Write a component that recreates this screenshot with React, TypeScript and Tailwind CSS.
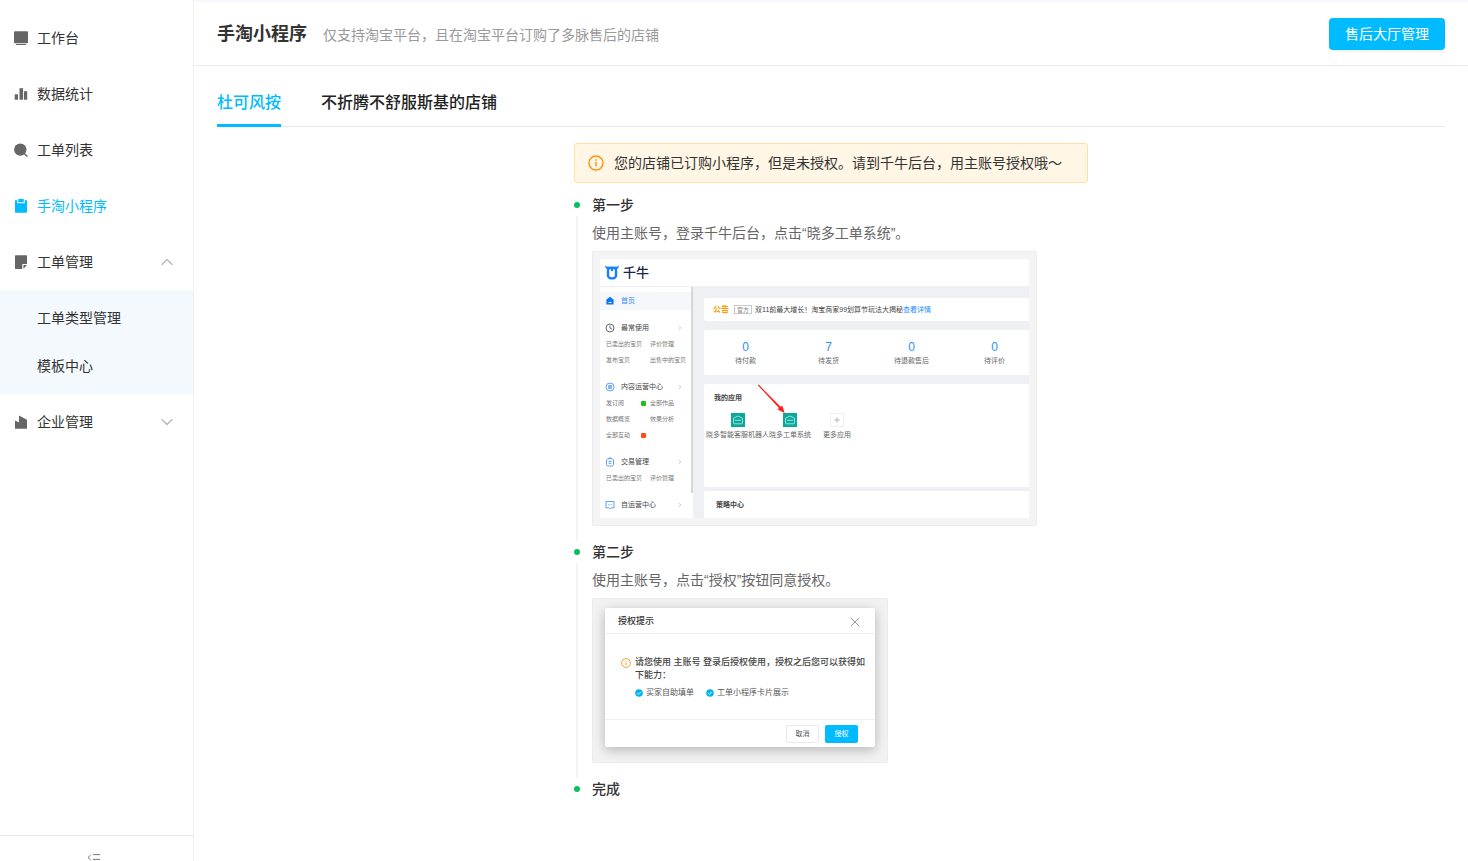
import { useState } from 'react';
import type { ReactNode } from 'react';
import { ChevronDown, ChevronUp, ChevronRight, X, Plus } from 'lucide-react';

const icons: Record<string, ReactNode> = {
  desk: (
    <>
      <rect x="0" y="0.3" width="14" height="12" rx="1" />
      <rect x="2" y="13" width="10" height="1" />
    </>
  ),
  stats: (
    <>
      <rect x="0.7" y="7.3" width="3.3" height="5.4" />
      <rect x="5.5" y="1.2" width="3.6" height="11.5" />
      <rect x="10" y="4.2" width="3.2" height="8.5" />
    </>
  ),
  list: (
    <>
      <circle cx="6.3" cy="6.6" r="6.2" />
      <path d="M10 10.3l3.4 3.3" stroke="currentColor" strokeWidth="1.4" />
    </>
  ),
  mini: <path d="M1 1.3h2.3v3h7.4v-3H13V13a.8.8 0 0 1-.8.8H1.8A.8.8 0 0 1 1 13zM4.3 0h5.4v3.2H4.3z" />,
  order: <path d="M1.6.3h10.8a.6.6 0 0 1 .6.6v8H8.3v5H1.6a.6.6 0 0 1-.6-.6V.9a.6.6 0 0 1 .6-.6zM9.5 10.1H13l-3.5 3.6z" />,
  company: <path d="M1 5.4l4 2V.4l8 4.4v9H1z" />,
};

function MenuIcon({ name, className = '' }: { name: string; className?: string }) {
  return (
    <svg viewBox="0 0 14 14" fill="currentColor" className={`size-3.5 shrink-0 ${className}`} aria-hidden="true">
      {icons[name]}
    </svg>
  );
}

const menu = [
  { icon: 'desk', label: '工作台' },
  { icon: 'stats', label: '数据统计' },
  { icon: 'list', label: '工单列表' },
  { icon: 'mini', label: '手淘小程序', active: true },
];

function Sidebar() {
  const [orderOpen, setOrderOpen] = useState(true);
  const Arrow = orderOpen ? ChevronUp : ChevronDown;

  return (
    <aside className="sticky top-0 flex h-screen w-[194px] shrink-0 flex-col overflow-hidden border-r border-[#efefef] bg-white">
      <nav className="flex-1 pt-2.5">
        {menu.map((m) => (
          <a
            key={m.label}
            href="#"
            className={`flex h-14 items-center gap-[9px] px-3.5 ${m.active ? 'text-[#00bbff]' : 'text-[#333]'}`}
          >
            <MenuIcon name={m.icon} className={m.active ? '' : 'text-[#666]'} />
            {m.label}
          </a>
        ))}
        <button onClick={() => setOrderOpen(!orderOpen)} className="flex h-14 w-full items-center gap-[9px] pr-4 pl-3.5">
          <MenuIcon name="order" className="text-[#666]" />
          工单管理
          <Arrow className="ml-auto size-5 text-[#b5b5b5]" strokeWidth={1.5} />
        </button>
        {orderOpen && (
          <div className="bg-[#f4f9fd] py-1">
            <a href="#" className="flex h-12 items-center pl-[37px]">工单类型管理</a>
            <a href="#" className="flex h-12 items-center pl-[37px]">模板中心</a>
          </div>
        )}
        <button className="flex h-14 w-full items-center gap-[9px] pr-4 pl-3.5">
          <MenuIcon name="company" className="text-[#666]" />
          企业管理
          <ChevronDown className="ml-auto size-5 text-[#b5b5b5]" strokeWidth={1.5} />
        </button>
      </nav>
      <button aria-label="收起菜单" className="flex h-[26px] shrink-0 justify-center border-t border-[#e8e8e8] pt-[18px] pr-1.5">
        <svg viewBox="0 0 14 10" className="h-2.5 w-3.5 shrink-0" fill="none" stroke="#777" aria-hidden="true">
          <path d="M3.6 1L1 3.5 3.6 6M6 .6h7M6 5.4h7" />
        </svg>
      </button>
    </aside>
  );
}

function Step({ title, last, children }: { title: string; last?: boolean; children?: ReactNode }) {
  return (
    <li className="flex gap-3">
      <div className="flex w-1.5 flex-col items-center">
        <div className="flex h-[22px] items-center">
          <span className="size-1.5 rounded-full bg-[#07c160]" />
        </div>
        {!last && <div className="w-0.5 flex-1 bg-[#f4f4f4]" />}
      </div>
      <div className={last ? '' : 'pb-[15px]'}>
        <h3 className="leading-[22px] font-medium text-[#333]">{title}</h3>
        {children}
      </div>
    </li>
  );
}

const groups = [
  { icon: 'clock', title: '最常使用', items: ['已卖出的宝贝', '评价管理', '发布宝贝', '出售中的宝贝'] },
  { icon: 'hash', title: '内容运营中心', items: ['发订阅', '全部作品', '数据概览', '效果分析', '全部互动', ''] },
  { icon: 'clip', title: '交易管理', items: ['已卖出的宝贝', '评价管理'] },
  { icon: 'chat', title: '自运营中心', items: [] },
];

const groupIcons: Record<string, ReactNode> = {
  clock: <path d="M5 1a4 4 0 1 0 0 8 4 4 0 0 0 0-8zM5 2.5V5l2 1.3" stroke="#444" />,
  hash: <path d="M5 1a4 4 0 1 0 0 8 4 4 0 0 0 0-8zM3 4h4M3 6h4M4 3v4M6 3v4" stroke="#3b8cf5" />,
  clip: <path d="M2.5 1.8h5l1 1v4.8L7.5 9h-5l-1-1.4V2.8zM3.6 1h2.8M3.5 4.5h3M3.5 6.3h3" stroke="#3b8cf5" />,
  chat: <path d="M1 1.5h8v6.3H6L5 8.8l-1-1H1zM3 4.8h.8M4.6 4.8h.8M6.2 4.8H7" stroke="#3b8cf5" />,
};

const stats = [
  ['0', '待付款'],
  ['7', '待发货'],
  ['0', '待退款售后'],
  ['0', '待评价'],
];

function AppIcon() {
  return (
    <svg viewBox="0 0 14 14" className="size-3.5" aria-hidden="true">
      <rect width="14" height="14" fill="#0aa99b" />
      <path d="M2.5 5.2L7 3l4.5 2.2v4.6q0 1-1 1h-7q-1 0-1-1zM4 7.3h6" fill="none" stroke="#bff0ea" strokeWidth=".8" />
    </svg>
  );
}

function QianniuPreview() {
  return (
    <div className="mt-[7px] w-[445px] rounded-xs border border-[#ececec] bg-[#f4f4f4] p-[7px] text-[7px] leading-4 text-[#444]">
      <div className="flex h-7 items-center gap-1 border-b border-[#eeeff1] bg-white pl-[5px]">
        <svg viewBox="0 0 14 15" className="h-[15px] w-3.5" aria-hidden="true">
          <path d="M0 .6L2 1.8 4.2 1.5 3 4.6Q.4 4 0 .6zM14 .6L12 1.8 9.8 1.5 11 4.6Q13.600 4 14 .6z" fill="#1480ff" />
          <rect x="3" y="2.6" width="8" height="10.800" rx="3" fill="#fff" stroke="#1480ff" strokeWidth="2.400" />
          <path d="M5.800 3h2.400v2.600L7 6.600l-1.200-1z" fill="#1480ff" />
        </svg>
        <span className="text-[13px] font-medium text-[#1b2447]">千牛</span>
      </div>
      <div className="flex h-[231px] overflow-hidden bg-[#eef0f4]">
        <div className="flex w-[93px] shrink-0 bg-white">
          <div className="w-[91px] pt-[5px]">
            <div className="mb-2.5 flex h-[18px] items-center gap-1.5 bg-[#f5f7fa] pl-[5px] text-[#3b8cf5]">
              <svg viewBox="0 0 10 10" className="size-2.5" fill="#0c77f2" aria-hidden="true">
                <path d="M5 .8l4.4 3.5H8.6v4.2H1.4V4.3H.6zM3.6 6v.9h2.8V6z" fillRule="evenodd" />
              </svg>
              首页
            </div>
            <div className="flex flex-col gap-[11px]">
              {groups.map((g) => (
                <div key={g.title}>
                  <div className="flex h-4 items-center gap-1.5 pr-2 pl-[5px]">
                    <svg viewBox="0 0 10 10" className="size-2.5" fill="none" strokeWidth=".8" aria-hidden="true">
                      {groupIcons[g.icon]}
                    </svg>
                    {g.title}
                    <ChevronRight className="ml-auto size-1.5 text-[#888]" />
                  </div>
                  <div className="grid grid-cols-[44px_40px] pl-1.5 text-[6px] whitespace-nowrap text-[#777]">
                    {g.items.map((t, i) => (
                      <span key={i} className="flex h-4 items-center justify-between">
                        {t}
                        {t === '发订阅' && <i className="mr-1 size-[5px] rounded-[1px] bg-[#19c21e]" />}
                        {t === '全部互动' && <i className="mr-1 size-[5px] rounded-[1px] bg-[#ff4a17]" />}
                      </span>
                    ))}
                  </div>
                </div>
              ))}
            </div>
          </div>
          <div className="h-[206px] w-0.5 bg-[#d5d6d9]" />
        </div>
        <div className="relative flex-1 pt-[11px] pl-[11px]">
          <div className="flex h-[23px] items-center rounded-l-xs bg-white pl-[9px] whitespace-nowrap">
            <b className="text-[8px] text-[#ff9a00]">公告</b>
            <span className="mr-[3px] ml-[5px] flex h-[9px] items-center border border-[#c8c8c8] px-0.5 text-[6px] text-[#888]">官方</span>
            双11前最大增长！淘宝商家99划算节玩法大揭秘
            <a href="#" className="text-[#1b8cff]">查看详情</a>
          </div>
          <div className="mt-[9px] grid h-[45px] grid-cols-[repeat(4,83px)] content-center overflow-hidden rounded-l-xs bg-white text-center text-[#666]">
            {stats.map(([n, label]) => (
              <div key={label}>
                <div className="text-[12px] leading-4 text-[#2b91f0]">{n}</div>
                <div className="leading-3">{label}</div>
              </div>
            ))}
          </div>
          <div className="mt-[9px] h-[103px] rounded-l-xs bg-white pt-1.5 pl-0.5">
            <b className="block pl-2">我的应用</b>
            <div className="flex pt-[7px] leading-4 whitespace-nowrap text-[#666]">
              <div className="flex flex-col items-center">
                <AppIcon />
                晓多智能客服机器人
              </div>
              <div className="flex flex-col items-center">
                <AppIcon />
                晓多工单系统
              </div>
              <div className="ml-3 flex flex-col items-center">
                <span className="flex size-3.5 items-center justify-center border border-[#f0f0f0]">
                  <Plus className="size-2 text-[#999]" />
                </span>
                更多应用
              </div>
            </div>
          </div>
          <div className="mt-1 flex h-[27px] items-center rounded-tl-xs bg-white pl-3">
            <b>策略中心</b>
          </div>
          {/* pointer towards the ticket system app */}
          <svg viewBox="0 0 28 30" className="absolute top-[97px] left-16 h-[30px] w-7" aria-hidden="true">
            <path d="M.8 1.2l.8-.6 22 22.2 1.8-1L27.6 29l-7-3.4 1.4-1.5z" fill="#ff1f1f" />
          </svg>
        </div>
      </div>
    </div>
  );
}

function CheckDot() {
  return (
    <svg viewBox="0 0 8 8" className="size-2" aria-hidden="true">
      <circle cx="4" cy="4" r="3.8" fill="#00b4f5" />
      <path d="M2.2 4.1l1.3 1.3 2.3-2.5" fill="none" stroke="#fff" strokeWidth=".9" />
    </svg>
  );
}

function InfoIcon({ className }: { className: string }) {
  return (
    <svg viewBox="0 0 16 16" className={className} fill="none" stroke="#ff8f0f" strokeWidth="1.4" aria-hidden="true">
      <circle cx="8" cy="8" r="7" />
      <path d="M8 7v4.6M8 4.3v1.5" />
    </svg>
  );
}

function AuthPreview() {
  return (
    <div className="mt-[7px] w-[296px] rounded-xs border border-[#ebebeb] bg-[#f2f2f2] px-3 pt-[9px] pb-[15px] text-[7px] text-[#555]">
      <div className="w-[270px] rounded-xs bg-white shadow-[0_3px_12px_rgba(0,0,0,0.25)]">
        <div className="flex h-[26px] items-center justify-between border-b border-[#eee] pt-0.5 pr-3 pl-[13px]">
          <b className="text-[9px] font-medium text-[#333]">授权提示</b>
          <X className="size-4 text-[#999]" strokeWidth={1.5} />
        </div>
        <div className="flex h-[85px] gap-1 pt-[22px] pl-4">
          <InfoIcon className="mt-0.5 size-2.5 shrink-0" />
          <div>
            <p className="w-[234px] text-[9px] leading-[13px] font-medium text-[#444]">
              请您使用 主账号 登录后授权使用，授权之后您可以获得如下能力：
            </p>
            <div className="flex gap-3 pt-[3px] text-[8px] leading-4">
              <span className="flex items-center gap-[3px]"><CheckDot />买家自助填单</span>
              <span className="flex items-center gap-[3px]"><CheckDot />工单小程序卡片展示</span>
            </div>
          </div>
        </div>
        <div className="flex h-7 items-center justify-end gap-1.5 border-t border-[#eee] pr-[17px]">
          <button className="h-[18px] w-[33px] rounded-xs border border-[#e8e8e8]">取消</button>
          <button className="h-[18px] w-[33px] rounded-xs bg-[#00bbff] text-white">授权</button>
        </div>
      </div>
    </div>
  );
}

const shops = ['杜可风按', '不折腾不舒服斯基的店铺'];

export default function App() {
  const [shop, setShop] = useState(0);

  return (
    <div className="flex min-h-screen bg-white font-['Liberation_Sans','Noto_Sans_CJK_SC',sans-serif] text-sm text-[#333]">
      <Sidebar />
      <main className="min-w-0 flex-1 border-t-2 border-[#f4f8fc]">
        <header className="flex h-16 items-center border-b border-[#ebebeb] px-[23px]">
          <h1 className="text-lg font-bold">手淘小程序</h1>
          <p className="ml-4 pt-0.5 text-[#999]">仅支持淘宝平台，且在淘宝平台订购了多脉售后的店铺</p>
          <button className="ml-auto h-8 rounded bg-[#00bbff] px-4 text-white shadow-[0_2px_0_rgba(0,0,0,0.04)]">售后大厅管理</button>
        </header>
        <div className="px-[23px]">
          <div role="tablist" className="flex gap-10 border-b border-[#e8e8e8] pt-[26px]">
            {shops.map((s, i) => (
              <button
                key={s}
                role="tab"
                aria-selected={shop === i}
                onClick={() => setShop(i)}
                className={`-mb-px border-b-3 pb-2.5 text-base leading-[22px] font-medium ${
                  shop === i ? 'border-[#00bbff] text-[#00bbff]' : 'border-transparent text-[#222]'
                }`}
              >
                {s}
              </button>
            ))}
          </div>
          <div className="mx-auto w-[514px] max-w-full pt-4 pb-[60px]">
            <div role="alert" className="mb-[11px] flex h-10 items-center gap-2.5 rounded-[3px] border border-[#fee0a0] bg-[#fff6e5] px-[13px]">
              <InfoIcon className="size-4 shrink-0" />
              您的店铺已订购小程序，但是未授权。请到千牛后台，用主账号授权哦～
            </div>
            <ol>
              <Step title="第一步">
                <p className="mt-1.5 leading-[22px] text-[#666]">使用主账号，登录千牛后台，点击“晓多工单系统”。</p>
                <QianniuPreview />
              </Step>
              <Step title="第二步">
                <p className="mt-1.5 leading-[22px] text-[#666]">使用主账号，点击“授权”按钮同意授权。</p>
                <AuthPreview />
              </Step>
              <Step title="完成" last />
            </ol>
          </div>
        </div>
      </main>
    </div>
  );
}
